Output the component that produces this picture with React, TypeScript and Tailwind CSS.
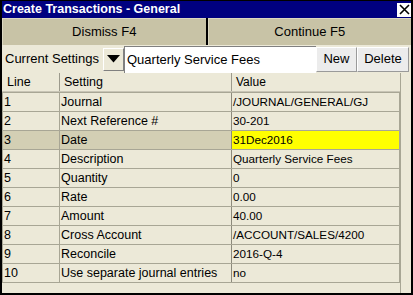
import React from "react";

const rows: [string, string, string][] = [
  ["1", "Journal", "/JOURNAL/GENERAL/GJ"],
  ["2", "Next Reference #", "30-201"],
  ["3", "Date", "31Dec2016"],
  ["4", "Description", "Quarterly Service Fees"],
  ["5", "Quantity", "0"],
  ["6", "Rate", "0.00"],
  ["7", "Amount", "40.00"],
  ["8", "Cross Account", "/ACCOUNT/SALES/4200"],
  ["9", "Reconcile", "2016-Q-4"],
  ["10", "Use separate journal entries", "no"],
];

export default function App() {
  return (
    <div
      className="w-[413px] h-[295px] bg-black px-[2px] pt-[1px] pb-[2px] flex flex-col overflow-hidden"
      style={{ fontFamily: '"Liberation Sans", Arial, sans-serif' }}
    >
      {/* Title bar */}
      <div className="h-[17px] bg-[#000080] flex items-center justify-between">
        <span className="text-white font-bold text-[12.5px] leading-none pl-[1px]">
          Create Transactions - General
        </span>
        <div className="w-[14px] h-[14px] bg-white flex items-center justify-center">
          <svg width="11" height="11" viewBox="0 0 11 11">
            <path d="M1 1 L10 10 M10 1 L1 10" stroke="black" strokeWidth="1.6" />
          </svg>
        </div>
      </div>
      {/* Buttons */}
      <div className="h-[27px] flex gap-[2px] bg-black">
        <div className="flex-1 bg-[#c8c3a6] border-t border-l border-[#dcd8c2] flex items-center justify-center text-[13px] text-black">
          Dismiss F4
        </div>
        <div className="flex-1 bg-[#c8c3a6] border-t border-l border-[#dcd8c2] flex items-center justify-center text-[13px] text-black">
          Continue F5
        </div>
      </div>
      {/* Settings row */}
      <div className="h-[28px] bg-[#ece9d8] flex items-center">
        <span className="text-[13px] text-black pl-[3px] w-[101px]">Current Settings</span>
        <div className="w-[21px] h-[23px] bg-[#ece9d8] border border-[#808080] border-t-white border-l-white flex items-center justify-center">
          <svg width="13" height="8" viewBox="0 0 13 8">
            <path d="M0 0 H13 L6.5 7.5 Z" fill="black" />
          </svg>
        </div>
        <div className="w-[192px] h-[27px] bg-white border-t border-l border-[#808080] flex items-center pl-[2px] text-[13px] text-black">
          Quarterly Service Fees
        </div>
        <div className="w-[41px] h-[25px] bg-[#ececec] border border-[#9a9a9a] border-t-white border-l-white flex items-center justify-center text-[13px] text-black">
          New
        </div>
        <div className="w-[52px] h-[25px] bg-[#ececec] border border-[#9a9a9a] border-t-white border-l-white flex items-center justify-center text-[13px] text-black">
          Delete
        </div>
      </div>
      {/* Table */}
      <div className="flex-1 bg-[#ece9d8] flex">
        <div className="w-[398px] flex flex-col">
          <div className="h-[19px] flex border-b border-[#c8c5b6] text-[12.5px] text-black">
            <div className="w-[58px] pl-[5px] flex items-center border-r border-[#9c9a8c]">Line</div>
            <div className="w-[172px] pl-[4px] flex items-center border-r border-[#9c9a8c]">Setting</div>
            <div className="flex-1 pl-[4px] flex items-center text-[12px]">Value</div>
          </div>
          {rows.map(([n, s, v]) => {
            const sel = n === "3";
            return (
              <div key={n} className="h-[19px] flex border-t border-[#a8a695] text-black">
                <div
                  className={`w-[58px] pl-[1px] flex items-center text-[12.5px] border-l border-[#a8a695] border-r ${
                    sel ? "bg-[#d3cfb4]" : "bg-[#ece9d8]"
                  }`}
                >
                  {n}
                </div>
                <div
                  className={`w-[172px] pl-[1px] flex items-center text-[12.5px] border-r border-[#8c8a7c] whitespace-nowrap overflow-hidden ${
                    sel ? "bg-[#d3cfb4]" : "bg-[#ece9d8]"
                  }`}
                >
                  {s}
                </div>
                <div
                  className={`flex-1 pl-[1px] flex items-center text-[11.7px] border-r border-[#a8a695] ${
                    sel ? "bg-[#ffff00]" : "bg-[#ece9d8]"
                  }`}
                >
                  {v}
                </div>
              </div>
            );
          })}
          <div className="border-t border-[#a8a695]" />
        </div>
        <div className="flex-1 border-l border-[#a8a695] bg-[#ece9d8]" />
      </div>
    </div>
  );
}
